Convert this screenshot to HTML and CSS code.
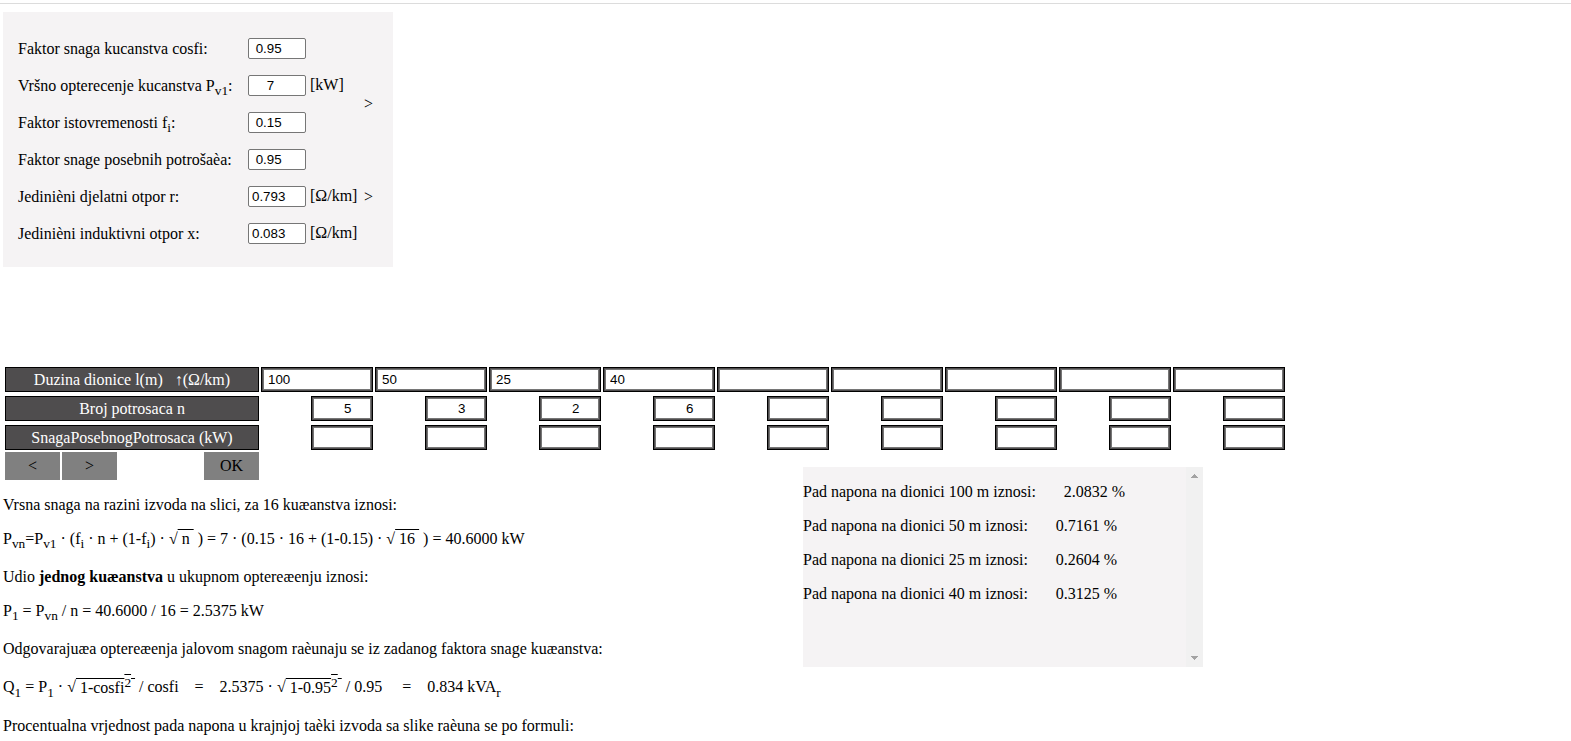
FILE: index.html
```
<!DOCTYPE html>
<html lang="hr">
<head>
<meta charset="utf-8">
<title>Pad napona</title>
<link rel="stylesheet" href="styles.css">
</head>
<body>
<form class="factors">
  <label for="cosfi">Faktor snaga kucanstva cosfi:</label>
  <div class="field"><input id="cosfi" type="text" value="&nbsp;0.95"></div>
  <label for="pv1">Vršno opterecenje kucanstva P<sub>v1</sub>:</label>
  <div class="field"><input id="pv1" type="text" value="&nbsp;&nbsp;&nbsp;&nbsp;7"> [kW]</div>
  <span class="more more-load">&gt;</span>
  <label for="fi">Faktor istovremenosti f<sub>i</sub>:</label>
  <div class="field"><input id="fi" type="text" value="&nbsp;0.15"></div>
  <label for="special">Faktor snage posebnih potrošaèa:</label>
  <div class="field"><input id="special" type="text" value="&nbsp;0.95"></div>
  <label for="r">Jedinièni djelatni otpor r:</label>
  <div class="field"><input id="r" type="text" value="0.793"> [Ω/km]</div>
  <span class="more more-resistance">&gt;</span>
  <label for="x">Jedinièni induktivni otpor x:</label>
  <div class="field"><input id="x" type="text" value="0.083"> [Ω/km]</div>
</form>

<table class="sections">
  <tr>
    <th scope="row"><div class="head">Duzina dionice l(m) &nbsp; ↑(Ω/km)</div></th>
    <td><div class="box"><input aria-label="Duzina 1" value="100"></div></td>
    <td><div class="box"><input aria-label="Duzina 2" value="50"></div></td>
    <td><div class="box"><input aria-label="Duzina 3" value="25"></div></td>
    <td><div class="box"><input aria-label="Duzina 4" value="40"></div></td>
    <td><div class="box"><input aria-label="Duzina 5"></div></td>
    <td><div class="box"><input aria-label="Duzina 6"></div></td>
    <td><div class="box"><input aria-label="Duzina 7"></div></td>
    <td><div class="box"><input aria-label="Duzina 8"></div></td>
    <td><div class="box"><input aria-label="Duzina 9"></div></td>
  </tr>
  <tr>
    <th scope="row"><div class="head">Broj potrosaca n</div></th>
    <td><div class="box small"><input aria-label="Broj 1" value="&nbsp;&nbsp;&nbsp;&nbsp;&nbsp;&nbsp;&nbsp;5"></div></td>
    <td><div class="box small"><input aria-label="Broj 2" value="&nbsp;&nbsp;&nbsp;&nbsp;&nbsp;&nbsp;&nbsp;3"></div></td>
    <td><div class="box small"><input aria-label="Broj 3" value="&nbsp;&nbsp;&nbsp;&nbsp;&nbsp;&nbsp;&nbsp;2"></div></td>
    <td><div class="box small"><input aria-label="Broj 4" value="&nbsp;&nbsp;&nbsp;&nbsp;&nbsp;&nbsp;&nbsp;6"></div></td>
    <td><div class="box small"><input aria-label="Broj 5"></div></td>
    <td><div class="box small"><input aria-label="Broj 6"></div></td>
    <td><div class="box small"><input aria-label="Broj 7"></div></td>
    <td><div class="box small"><input aria-label="Broj 8"></div></td>
    <td><div class="box small"><input aria-label="Broj 9"></div></td>
  </tr>
  <tr>
    <th scope="row"><div class="head">SnagaPosebnogPotrosaca (kW)</div></th>
    <td><div class="box small"><input aria-label="Snaga 1"></div></td>
    <td><div class="box small"><input aria-label="Snaga 2"></div></td>
    <td><div class="box small"><input aria-label="Snaga 3"></div></td>
    <td><div class="box small"><input aria-label="Snaga 4"></div></td>
    <td><div class="box small"><input aria-label="Snaga 5"></div></td>
    <td><div class="box small"><input aria-label="Snaga 6"></div></td>
    <td><div class="box small"><input aria-label="Snaga 7"></div></td>
    <td><div class="box small"><input aria-label="Snaga 8"></div></td>
    <td><div class="box small"><input aria-label="Snaga 9"></div></td>
  </tr>
</table>

<div class="lower">
  <div class="work">
    <div class="actions">
      <button type="button">&lt;</button>
      <button type="button">&gt;</button>
      <button type="button" class="ok">OK</button>
    </div>
    <p>Vrsna snaga na razini izvoda na slici, za 16 kuæanstva iznosi:</p>
    <p>P<sub>vn</sub>=P<sub>v1</sub> · (f<sub>i</sub> · n + (1-f<sub>i</sub>) · √<span class="root">&nbsp;n&nbsp;</span> ) = 7 · (0.15 · 16 + (1-0.15) · √<span class="root">&nbsp;16&nbsp;</span> ) = 40.6000 kW</p>
    <p>Udio <b>jednog kuæanstva</b> u ukupnom optereæenju iznosi:</p>
    <p>P<sub>1</sub> = P<sub>vn</sub> / n = 40.6000 / 16 = 2.5375 kW</p>
    <p>Odgovarajuæa optereæenja jalovom snagom raèunaju se iz zadanog faktora snage kuæanstva:</p>
    <p>Q<sub>1</sub> = P<sub>1</sub> · √<span class="root">&nbsp;1-cosfi<sup>2</sup>&nbsp;</span> / cosfi &nbsp;&nbsp; = &nbsp;&nbsp; 2.5375 · √<span class="root">&nbsp;1-0.95<sup>2</sup>&nbsp;</span> / 0.95 &nbsp;&nbsp;&nbsp; = &nbsp;&nbsp; 0.834 kVA<sub>r</sub></p>
    <p>Procentualna vrjednost pada napona u krajnjoj taèki izvoda sa slike raèuna se po formuli:</p>
  </div>
  <div class="results">
    <div class="drops">
      <p>Pad napona na dionici 100 m iznosi: &nbsp;&nbsp;&nbsp;&nbsp;&nbsp; 2.0832 %</p>
      <p>Pad napona na dionici 50 m iznosi: &nbsp;&nbsp;&nbsp;&nbsp;&nbsp; 0.7161 %</p>
      <p>Pad napona na dionici 25 m iznosi: &nbsp;&nbsp;&nbsp;&nbsp;&nbsp; 0.2604 %</p>
      <p>Pad napona na dionici 40 m iznosi: &nbsp;&nbsp;&nbsp;&nbsp;&nbsp; 0.3125 %</p>
    </div>
    <div class="scroll">
      <svg width="17" height="17" viewBox="0 0 17 17"><path d="M5 11V10H6V9H7V8H8V7H9V8H10V9H11V10H12V11z"/></svg>
      <svg width="17" height="17" viewBox="0 0 17 17"><path d="M5 6V7H6V8H7V9H8V10H9V9H10V8H11V7H12V6z"/></svg>
    </div>
  </div>
</div>
</body>
</html>
```
FILE: styles.css
```
html {
  overflow: hidden;
}
body {
  margin: 3px 0 0;
  border-top: 1px solid #dcdcdc;
  padding: 8px 3px 0;
  background: #fff;
  color: #000;
  font-family: "Liberation Serif", "Times New Roman", serif;
  font-size: 16px;
}
.factors {
  display: grid;
  grid-template-columns: 230px 1fr 20px;
  grid-auto-rows: 37px;
  align-items: center;
  width: 390px;
  box-sizing: border-box;
  padding: 18px 9px 15px 15px;
  background: #f5f3f4;
}
.factors label {
  grid-column: 1;
}
.factors sub {
  line-height: 0;
}
.field {
  grid-column: 2;
  white-space: nowrap;
}
.field input {
  box-sizing: border-box;
  width: 58px;
  height: 21px;
  border: 1px solid #767676;
  border-radius: 2px;
  padding: 1px 3px;
}
.more {
  grid-column: 3;
}
.more-load {
  grid-row: 2 / span 2;
}
.more-resistance {
  grid-row: 5;
}
input {
  font-family: "Liberation Sans", Arial, sans-serif;
  color: #000;
  background: #fff;
}
.sections {
  margin-top: 96px;
  border-spacing: 2px;
}
.sections th,
.sections td {
  height: 27px;
  padding: 0;
  vertical-align: bottom;
  font-weight: normal;
}
.head,
.box {
  box-sizing: border-box;
  height: 25px;
  border: 1px solid #000;
  background: #4f4d4e;
}
.head {
  width: 254px;
  line-height: 23px;
  color: #fff;
}
.box {
  width: 112px;
  padding: 1px;
}
.small {
  width: 62px;
  margin-left: auto;
}
.box input {
  display: block;
  box-sizing: border-box;
  width: 100%;
  height: 21px;
  border: 1px solid #767676;
  padding: 1px 4px;
}
.lower {
  display: grid;
  grid-template-columns: minmax(0, 800px) 400px;
  align-items: start;
}
.actions {
  display: flex;
  gap: 2px;
  width: 254px;
  margin-left: 2px;
}
.actions button {
  width: 55px;
  height: 28px;
  border: 0;
  padding: 0;
  background: #808080;
  font: inherit;
  color: #000;
}
.actions .ok {
  margin-left: auto;
}
p {
  margin: 16px 0;
}
.root {
  text-decoration: overline;
}
.results {
  display: flex;
  min-height: 200px;
  margin-top: 15px;
  background: #f5f3f4;
}
.drops {
  flex: 1;
}
.scroll {
  display: flex;
  flex-direction: column;
  justify-content: space-between;
  width: 17px;
  background: #f1f1f1;
}
.scroll path {
  fill: #a3a3a3;
}
```
